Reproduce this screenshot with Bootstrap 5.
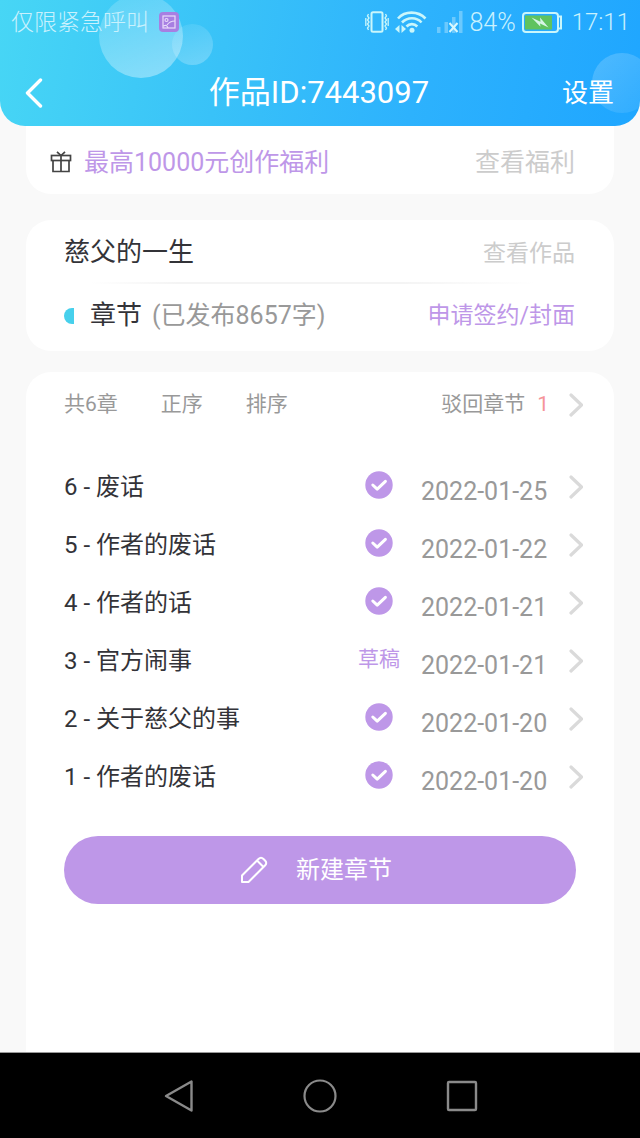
<!DOCTYPE html>
<html lang="zh-CN">
<head>
<meta charset="utf-8">
<meta name="viewport" content="width=device-width, initial-scale=1">
<title>作品ID:7443097</title>
<link href="https://cdn.jsdelivr.net/npm/bootstrap@5.3.0/dist/css/bootstrap.min.css" rel="stylesheet">
<style>
:root { --purple: #be97e8; --ink: #333338; --muted: #999; --faint: #ccc; }
body { background: #f9f9f9; color: var(--ink); font-family: Roboto, "Noto Sans CJK SC", sans-serif; line-height: 1; }
a { color: inherit; text-decoration: none; }
svg { display: block; flex: none; }
.app-head { background: linear-gradient(100deg, #47d6f5 0%, #39c2f8 35%, #2db2fd 65%, #1fa6ff 100%); border-radius: 0 0 25px 25px; color: #fff; }
.status-bar { height: 44px; padding: 0 10px 0 11px; color: #c9f1fd; font-weight: 300; }
.status-icons { gap: 6px; }
.title-bar { height: 82px; padding: 16px 26px 0 24px; }
.carrier { font-size: 23px; margin-right: 10px; }
.clock { font-size: 24px; }
.page-title { font-size: 31px; font-weight: 400; }
.bubble { border-radius: 50%; background: linear-gradient(160deg, #ffffff22, #ffffff66); }
.bubble-l { width: 84px; height: 84px; left: 99px; top: -6px; }
.bubble-m { width: 41px; height: 41px; left: 172px; top: 24px; background: linear-gradient(160deg, #ffffff11, #ffffff44); }
.bubble-r { width: 60px; height: 60px; right: -12px; top: 53px; background: linear-gradient(140deg, #ffffff33, #ffffff11); }
.page-body { padding: 0 26px; }
.panel { background: #fff; border-radius: 25px; padding: 0 39px 0 38px; }
.panel-top { border-radius: 0 0 25px 25px; padding-left: 24px; padding-top: 4px; height: 68px; }
.panel-work { margin: 26px 0 21px; }
.panel-list { border-radius: 25px 25px 0 0; padding: 0 31px 0 38px; }
.work-row { height: 62px; padding-top: 4px; }
.count-row { height: 67px; padding-bottom: 4px; }
.t21 { font-size: 21px; } .t23 { font-size: 23px; } .t24 { font-size: 24px; } .t25 { font-size: 25px; } .t26 { font-size: 26px; }
.c-purple { color: var(--purple); } .c-muted { color: var(--muted); } .c-faint { color: var(--faint); } .c-red { color: #f59499; }
.divider { height: 2px; margin: 0 39px 0 26px; background: linear-gradient(90deg, #fff, #f4f4f4 20%, #f4f4f4 70%, #fff); }
.half-dot { width: 10px; height: 16px; border-radius: 10px 0 0 10px; background: #47d0ec; }
.count { margin-left: 10px; }
.tools { height: 65px; gap: 43px; }
.chapters { padding-top: 21px; }
.chapter { height: 58px; }
.state { width: 42px; margin-right: 21px; padding-bottom: 4px; }
.date { width: 128px; margin-right: 20px; padding-top: 8px; }
.btn-new { height: 68px; margin: 30px 7px 32px 0; padding-right: 20px; background: var(--purple); color: #fff; gap: 28px; --bs-btn-hover-bg: #b188e0; --bs-btn-hover-color: #fff; }
.sys-nav { height: 86px; background: #000; border-top: 1px solid #999; gap: 108px; }
.bare { border: 0; background: none; padding: 0; color: inherit; }
</style>
</head>
<body class="d-flex flex-column min-vh-100">
<svg width="0" height="0" class="position-absolute" aria-hidden="true">
  <symbol id="chev" viewBox="0 0 14 24"><path d="M2 2l10.500 10L2 22" fill="none" stroke="#dadada" stroke-width="3.200" stroke-linecap="round" stroke-linejoin="round"/></symbol>
  <symbol id="done" viewBox="0 0 28 28"><circle cx="14" cy="14" r="13.700" fill="#be97e8"/><path d="M7.800 14l4.400 4.200 8.200-7.800" fill="none" stroke="#fff" stroke-width="3" stroke-linecap="round" stroke-linejoin="round"/></symbol>
</svg>

<header class="app-head position-relative overflow-hidden">
  <span class="bubble bubble-l position-absolute"></span>
  <span class="bubble bubble-m position-absolute"></span>
  <span class="bubble bubble-r position-absolute"></span>
  <div class="status-bar position-relative d-flex align-items-center">
    <span class="carrier">仅限紧急呼叫</span>
    <svg width="20" height="20" viewBox="0 0 20 20"><rect width="20" height="20" rx="4" fill="#a77fe2"/><g fill="none" stroke="#e9dcfa" stroke-width="1.200"><rect x="4" y="4" width="12" height="12"/><circle cx="7.500" cy="8" r="1.500"/><path d="M4 14c3-1 4-1 5 2M8 13c2-3 4-4 8-4"/></g></svg>
    <div class="status-icons ms-auto d-flex align-items-center">
      <svg width="24" height="22" viewBox="0 0 24 22" fill="none" stroke="#c9f6fb"><rect x="6.500" y="1.200" width="11" height="19.600" rx="1.500" stroke-width="2"/><path d="M3.500 3l-1 2 1.500 2-1.500 2L4 11l-1.500 2L4 15l-1.500 2 1 2M20.500 3l1 2L20 7l1.500 2-1.500 2 1.500 2-1.500 2 1.500 2-1 2M.8 7v8M23.200 7v8" stroke-width="1.300"/></svg>
      <svg width="32" height="22" viewBox="0 0 32 22" fill="none" stroke="#c9f6fb" stroke-width="2.600"><path d="M3 7.500C10-.4 23-.4 30.500 7.500M7 11.500c5.500-5.600 14.500-5.600 19.500 0M11.500 15.500c3-3.200 7.800-3.200 10.800 0"/><circle cx="17" cy="19.300" r="2.500" fill="#c9f6fb" stroke="none"/><path d="M4.500 14v8L0 18zM6.500 14v8l4.500-4z" fill="#c9f6fb" stroke="none"/></svg>
      <svg class="ms-1" width="26" height="22" viewBox="0 0 26 22"><g fill="#6cc9fd"><rect y="16" width="3.500" height="6"/><rect x="7.500" y="11" width="3.500" height="11"/><rect x="15" y="6" width="3.500" height="16"/><rect x="22" y="0" width="3.500" height="22"/></g><path d="M12.500 12l8 9M20.500 12l-8 9" stroke="#d9f7fd" stroke-width="2"/></svg>
      <span class="t25">84%</span>
      <svg width="40" height="21" viewBox="0 0 40 21"><rect x="1" y="1" width="35" height="19" rx="3" fill="none" stroke="#c9f6fb" stroke-width="2"/><rect x="3" y="3.500" width="27" height="14" fill="#5fc35f"/><path d="M37 4.500h2v12h-2" fill="none" stroke="#c9f6fb" stroke-width="2"/><path d="M9.500 5.500l9 4.200L18 5.500l8.500 10-8.500-4 .5 3.200z" fill="#d5f5e5"/></svg>
      <span class="clock ms-1">17:11</span>
    </div>
  </div>
  <div class="title-bar position-relative d-flex align-items-center justify-content-between">
    <button class="bare" type="button" aria-label="返回"><svg width="52" height="30" viewBox="0 0 52 30"><path d="M16.500 2L3.500 15l13 13" fill="none" stroke="#fff" stroke-width="3.400" stroke-linecap="round" stroke-linejoin="round"/></svg></button>
    <h1 class="page-title m-0">作品ID:7443097</h1>
    <a href="#settings" class="t26">设置</a>
  </div>
</header>

<main class="page-body flex-grow-1 d-flex flex-column">
  <section class="panel panel-top d-flex align-items-center">
    <svg width="22" height="22" viewBox="0 0 22 22" fill="none" stroke="#444" stroke-width="1.700"><rect x="1.500" y="4.500" width="19" height="5"/><path d="M3 9.500v11h16v-11M11 4.500v16M7 .8l4 3.700L15 .8"/></svg>
    <a href="#welfare" class="t25 c-purple ms-2 ps-1">最高10000元创作福利</a>
    <a href="#welfare" class="t25 c-faint ms-auto">查看福利</a>
  </section>

  <section class="panel panel-work">
    <div class="work-row d-flex align-items-center justify-content-between">
      <h2 class="t26 fw-normal m-0">慈父的一生</h2>
      <a href="#work" class="t23 c-faint">查看作品</a>
    </div>
    <div class="divider"></div>
    <div class="count-row d-flex align-items-center">
      <span class="half-dot me-3"></span>
      <h3 class="t26 fw-normal m-0">章节</h3>
      <span class="count t25 c-muted">(已发布8657字)</span>
      <a href="#sign" class="t23 c-purple ms-auto">申请签约/封面</a>
    </div>
  </section>

  <section class="panel panel-list flex-grow-1">
    <div class="tools d-flex align-items-center t21 c-muted">
      <span>共6章</span>
      <button class="bare" type="button">正序</button>
      <button class="bare" type="button">排序</button>
      <a href="#rejected" class="ms-auto d-flex align-items-center"><span>驳回章节</span><span class="c-red mx-2 px-1">1</span><svg class="ms-2" width="14" height="24"><use href="#chev"/></svg></a>
    </div>
    <ul class="chapters list-unstyled m-0">
      <li><a href="#c6" class="chapter d-flex align-items-center"><span class="t24 flex-grow-1">6 - 废话</span><span class="state d-flex justify-content-center"><svg width="28" height="28"><use href="#done"/></svg></span><time class="date t25 c-muted">2022-01-25</time><svg width="14" height="24"><use href="#chev"/></svg></a></li>
      <li><a href="#c5" class="chapter d-flex align-items-center"><span class="t24 flex-grow-1">5 - 作者的废话</span><span class="state d-flex justify-content-center"><svg width="28" height="28"><use href="#done"/></svg></span><time class="date t25 c-muted">2022-01-22</time><svg width="14" height="24"><use href="#chev"/></svg></a></li>
      <li><a href="#c4" class="chapter d-flex align-items-center"><span class="t24 flex-grow-1">4 - 作者的话</span><span class="state d-flex justify-content-center"><svg width="28" height="28"><use href="#done"/></svg></span><time class="date t25 c-muted">2022-01-21</time><svg width="14" height="24"><use href="#chev"/></svg></a></li>
      <li><a href="#c3" class="chapter d-flex align-items-center"><span class="t24 flex-grow-1">3 - 官方闹事</span><span class="state t21 c-purple">草稿</span><time class="date t25 c-muted">2022-01-21</time><svg width="14" height="24"><use href="#chev"/></svg></a></li>
      <li><a href="#c2" class="chapter d-flex align-items-center"><span class="t24 flex-grow-1">2 - 关于慈父的事</span><span class="state d-flex justify-content-center"><svg width="28" height="28"><use href="#done"/></svg></span><time class="date t25 c-muted">2022-01-20</time><svg width="14" height="24"><use href="#chev"/></svg></a></li>
      <li><a href="#c1" class="chapter d-flex align-items-center"><span class="t24 flex-grow-1">1 - 作者的废话</span><span class="state d-flex justify-content-center"><svg width="28" height="28"><use href="#done"/></svg></span><time class="date t25 c-muted">2022-01-20</time><svg width="14" height="24"><use href="#chev"/></svg></a></li>
    </ul>
    <div class="d-flex">
      <button type="button" class="btn btn-new rounded-pill flex-grow-1 d-flex align-items-center justify-content-center t24">
        <svg width="28" height="28" viewBox="0 0 28 28" fill="none" stroke="#fff" stroke-width="2" stroke-linejoin="round"><path d="M2 26v-6.500L18.500 3q2.500-2.500 5 0l1.500 1.500q2.500 2.500 0 5L8.500 26zM17 4.500l6.500 6.500"/></svg>
        <span>新建章节</span>
      </button>
    </div>
  </section>
</main>

<nav class="sys-nav d-flex align-items-center justify-content-center">
  <button class="bare" type="button" aria-label="后退"><svg width="34" height="34" viewBox="0 0 34 34"><path d="M30.500 2.500v29L5 17z" fill="none" stroke="#8a8a8a" stroke-width="2.400" stroke-linejoin="round"/></svg></button>
  <button class="bare" type="button" aria-label="主页"><svg width="34" height="34" viewBox="0 0 34 34"><circle cx="17" cy="17" r="15.500" fill="none" stroke="#8a8a8a" stroke-width="2.200"/></svg></button>
  <button class="bare" type="button" aria-label="最近任务"><svg width="34" height="34" viewBox="0 0 34 34"><rect x="3" y="3" width="28" height="28" rx="1" fill="none" stroke="#8a8a8a" stroke-width="2.400"/></svg></button>
</nav>
<script src="https://cdn.jsdelivr.net/npm/bootstrap@5.3.0/dist/js/bootstrap.bundle.min.js"></script>
</body>
</html>
